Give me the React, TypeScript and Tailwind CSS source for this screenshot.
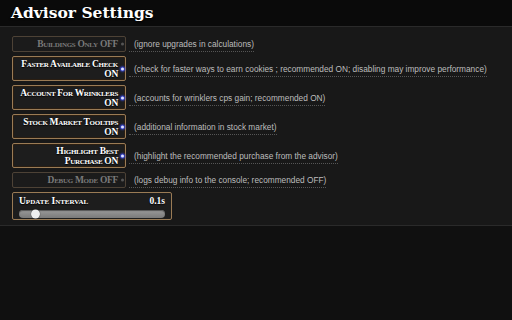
import React from "react";

type Row = { label: React.ReactNode; on: boolean; desc: string; two?: boolean };

const rows: Row[] = [
  { label: "Buildings Only OFF", on: false, desc: "(ignore upgrades in calculations)" },
  { label: <>Faster Available Check<br />ON</>, on: true, two: true, desc: "(check for faster ways to earn cookies ; recommended ON; disabling may improve performance)" },
  { label: <>Account For Wrinklers<br />ON</>, on: true, two: true, desc: "(accounts for wrinklers cps gain; recommended ON)" },
  { label: <>Stock Market Tooltips<br />ON</>, on: true, two: true, desc: "(additional information in stock market)" },
  { label: <>Highlight Best<br />Purchase ON</>, on: true, two: true, desc: "(highlight the recommended purchase from the advisor)" },
  { label: "Debug Mode OFF", on: false, desc: "(logs debug info to the console; recommended OFF)" },
];

const serif = { fontFamily: '"Liberation Serif", "DejaVu Serif", serif' };
const titleSerif = { fontFamily: '"DejaVu Serif", "Liberation Serif", serif' };
const sans = { fontFamily: '"Liberation Sans", "DejaVu Sans", sans-serif' };

export default function App() {
  return (
    <div className="w-[512px] h-[320px] bg-[#0f0f0f] overflow-hidden flex flex-col leading-none">
      <div className="h-[27px] shrink-0 bg-[#0a0a0a] border-b border-[#2a2a2a] flex items-center pl-[11px]">
        <span className="text-white font-bold text-[15.5px] leading-none" style={{ ...titleSerif, textShadow: "0 1px 2px #000" }}>
          Advisor Settings
        </span>
      </div>
      <div className="bg-[#181818] border-b border-[#2a2a2a] flex flex-col gap-[4px] pt-[9px] pb-[5px] pl-[12px]">
        {rows.map((r, i) => (
          <div key={i} className="flex items-center">
            <div
              className={
                "w-[114px] shrink-0 relative flex flex-col justify-center text-right pr-[7px] pl-[2px] rounded-[2px] border " +
                (r.two ? "h-[25px] " : "h-[16px] ") +
                (r.on
                  ? "border-[#9a7b55] bg-[#1d1d1d] text-white shadow-[inset_0_0_0_1px_#2a1e12]"
                  : "border-[#4d4236] bg-[#1b1b1b] text-[#7a7a7a]")
              }
              style={{ ...serif, fontVariant: "small-caps", textShadow: r.on ? "0 1px 1px #000" : "none" }}
            >
              <span className="text-[9.5px] font-bold leading-[10px] tracking-[-0.3px] whitespace-nowrap">{r.label}</span>
              <span
                className={
                  "absolute right-[1px] top-1/2 -translate-y-1/2 w-[3px] h-[3px] rounded-full " +
                  (r.on ? "bg-[#dfe4ff] shadow-[0_0_2px_1px_#3a4cff]" : "bg-[#555]")
                }
              />
            </div>
            <div className="ml-[3px] pl-[5px] border-b border-dotted border-[#555] pb-[1px] leading-[11px]">
              <span className="text-[#bdbdbd] text-[8.3px] leading-[11px] whitespace-nowrap" style={sans}>
                {r.desc}
              </span>
            </div>
          </div>
        ))}
        <div className="w-[160px] h-[28px] rounded-[2px] border border-[#9a7b55] bg-[#1d1d1d] px-[6px] pt-[3px] flex flex-col">
          <div className="flex justify-between items-center text-white font-bold text-[9.5px] leading-[10px]" style={{ ...serif, textShadow: "0 1px 1px #000" }}>
            <span style={{ fontVariant: "small-caps" }}>Update Interval</span>
            <span>0.1s</span>
          </div>
          <div className="mt-[4px] relative h-[8px] rounded-full bg-gradient-to-b from-[#9a9a9a] to-[#7a7a7a] shadow-[inset_0_1px_1px_#555]">
            <div className="absolute left-[12px] top-1/2 -translate-y-1/2 w-[9px] h-[9px] rounded-full bg-[#eeeeee] shadow-[0_0_1px_#000]" />
          </div>
        </div>
      </div>
      <div className="flex-1 bg-[#101010]" />
    </div>
  );
}
